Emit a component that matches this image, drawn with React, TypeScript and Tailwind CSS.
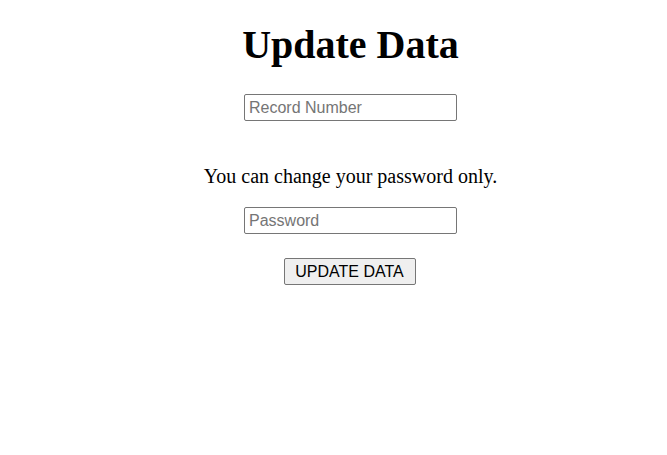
export default function App() {
  return (
    <div className="min-h-screen bg-white text-black font-['Liberation_Serif',serif] text-[20px]">
      <main className="flex flex-col items-center pl-[34px]">
        <h1 className="mt-[23px] text-[40px] leading-[44px] font-bold">Update Data</h1>
        <input
          type="text"
          placeholder="Record Number"
          className="mt-[27px] w-[213px] h-[27px] border border-[#767676] rounded-[2px] px-[4px] font-['Liberation_Sans',sans-serif] text-[16px] placeholder:text-[#757575] outline-none"
        />
        <p className="mt-[44px] leading-[22px]">You can change your password only.</p>
        <input
          type="password"
          placeholder="Password"
          className="mt-[20px] w-[213px] h-[27px] border border-[#767676] rounded-[2px] px-[4px] font-['Liberation_Sans',sans-serif] text-[16px] placeholder:text-[#757575] outline-none"
        />
        <button
          type="button"
          className="mt-[24px] mr-[2px] w-[132px] h-[27px] bg-[#efefef] border border-[#767676] rounded-[2px] font-['Liberation_Sans',sans-serif] text-[16px] text-black"
        >
          UPDATE DATA
        </button>
      </main>
    </div>
  );
}
